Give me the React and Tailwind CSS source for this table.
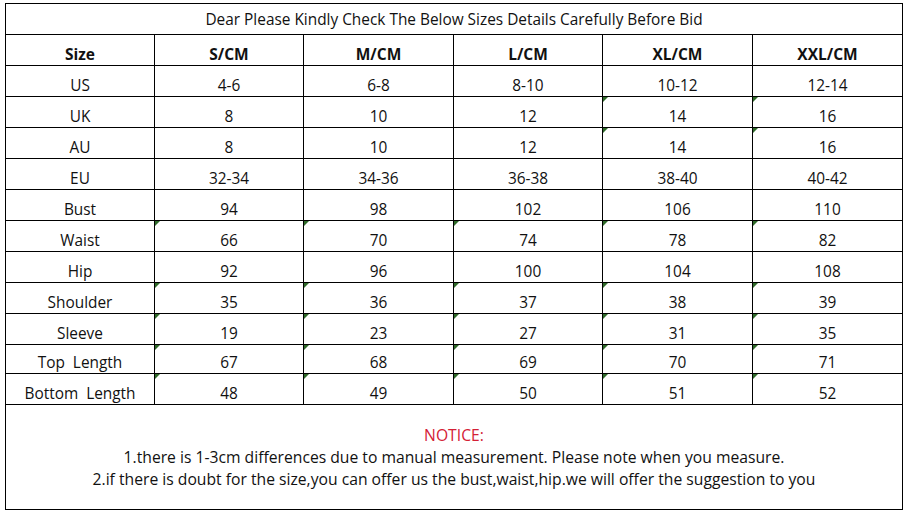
import React from "react";

const HEAD = ["Size", "S/CM", "M/CM", "L/CM", "XL/CM", "XXL/CM"];

// [label, values, which data cells carry the green "text" marker, row height]
const ROWS = [
  ["US", ["4-6", "6-8", "8-10", "10-12", "12-14"], [], 31],
  ["UK", ["8", "10", "12", "14", "16"], [3, 4], 31],
  ["AU", ["8", "10", "12", "14", "16"], [3, 4], 31],
  ["EU", ["32-34", "34-36", "36-38", "38-40", "40-42"], [], 31],
  ["Bust", ["94", "98", "102", "106", "110"], [], 31],
  ["Waist", ["66", "70", "74", "78", "82"], [0, 1, 2, 3, 4], 31],
  ["Hip", ["92", "96", "100", "104", "108"], [], 31],
  ["Shoulder", ["35", "36", "37", "38", "39"], [0, 1, 2, 3, 4], 31],
  ["Sleeve", ["19", "23", "27", "31", "35"], [0, 1, 2, 3, 4], 31],
  ["Top  Length", ["67", "68", "69", "70", "71"], [0, 1, 2, 3, 4], 29],
  ["Bottom  Length", ["48", "49", "50", "51", "52"], [0, 1, 2, 3, 4], 31],
];

function Cell({ children, marked, bold }) {
  return (
    <div
      className={[
        "relative flex items-end justify-center whitespace-pre border-r border-b border-black leading-[20px]",
        bold ? "pb-[1px] font-bold text-[15.5px]" : "pb-0 text-[15.4px]",
      ].join(" ")}
    >
      {marked && (
        <span className="absolute left-0 top-0 h-0 w-0 border-t-[5px] border-r-[5px] border-t-[#2f6a2a] border-r-transparent" />
      )}
      {children}
    </div>
  );
}

export default function App() {
  return (
    <div
      className="h-[514px] w-[905px] overflow-hidden bg-white pl-[5px] pt-[3px] text-[#111]"
      style={{ fontFamily: '"Open Sans", "Noto Sans", sans-serif' }}
    >
      <div className="grid w-[898px] grid-cols-[149px_149px_150px_149px_150px_150px] border-l border-t border-black">
        <div className="col-span-6 flex h-[31px] items-center justify-center border-r border-b border-black pt-[1px] text-[15.4px]">
          Dear Please Kindly Check The Below Sizes Details Carefully Before Bid
        </div>

        <div className="col-span-6 grid h-[31px] grid-cols-subgrid">
          {HEAD.map((h) => (
            <Cell key={h} bold>
              {h}
            </Cell>
          ))}
        </div>

        {ROWS.map(([label, vals, marks, h]) => (
          <div
            key={label}
            className={h === 29 ? "col-span-6 grid h-[29px] grid-cols-subgrid" : "col-span-6 grid h-[31px] grid-cols-subgrid"}
          >
            <Cell>{label}</Cell>
            {vals.map((v, i) => (
              <Cell key={i} marked={marks.includes(i)}>
                {v}
              </Cell>
            ))}
          </div>
        ))}

        <div className="col-span-6 flex h-[105px] flex-col items-center border-r border-b border-black pt-[19px] text-[15.7px] leading-[22px]">
          <div className="text-[#d42035]">NOTICE:</div>
          <div>1.there is 1-3cm differences due to manual measurement. Please note when you measure.</div>
          <div>2.if there is doubt for the size,you can offer us the bust,waist,hip.we will offer the suggestion to you</div>
        </div>
      </div>
    </div>
  );
}
